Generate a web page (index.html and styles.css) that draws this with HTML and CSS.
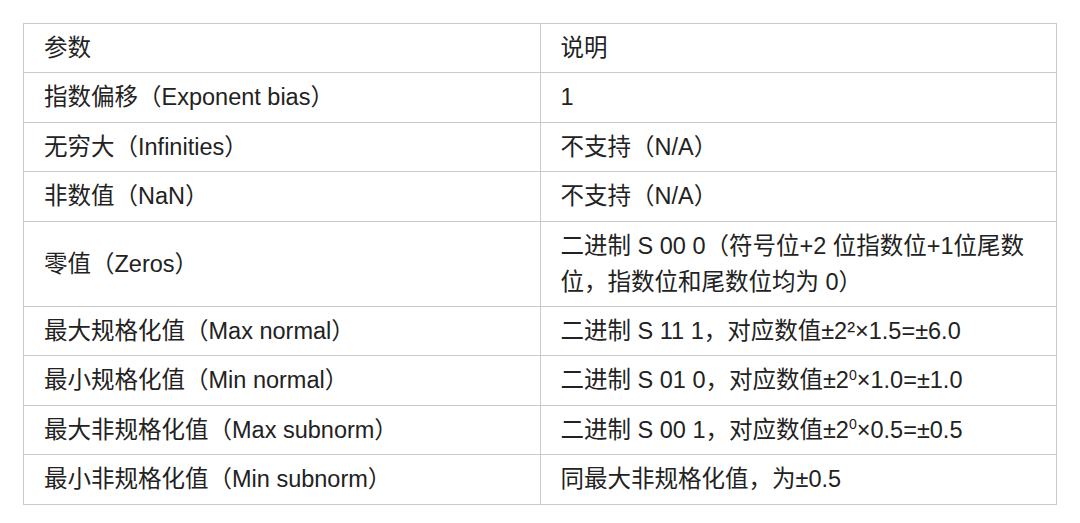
FILE: index.html
```html
<!DOCTYPE html>
<html lang="zh-CN">
<head>
<meta charset="utf-8">
<title>FP4 参数</title>
<link rel="stylesheet" href="styles.css">
</head>
<body>
<table class="spec">
  <tbody>
    <tr><td>参数</td><td>说明</td></tr>
    <tr><td>指数偏移（Exponent bias）</td><td>1</td></tr>
    <tr><td>无穷大（Infinities）</td><td>不支持（N/A）</td></tr>
    <tr><td>非数值（NaN）</td><td>不支持（N/A）</td></tr>
    <tr><td>零值（Zeros）</td><td>二进制 S 00 0（符号位+2 位指数位+1位尾数位，指数位和尾数位均为 0）</td></tr>
    <tr><td>最大规格化值（Max normal）</td><td>二进制 S 11 1，对应数值±2²×1.5=±6.0</td></tr>
    <tr><td>最小规格化值（Min normal）</td><td>二进制 S 01 0，对应数值±2<span class="sup">0</span>×1.0=±1.0</td></tr>
    <tr><td>最大非规格化值（Max subnorm）</td><td>二进制 S 00 1，对应数值±2<span class="sup">0</span>×0.5=±0.5</td></tr>
    <tr><td>最小非规格化值（Min subnorm）</td><td>同最大非规格化值，为±0.5</td></tr>
  </tbody>
</table>
</body>
</html>
```
FILE: styles.css
```css
html, body {
  margin: 0;
  padding: 0;
  background: #ffffff;
}

body {
  padding: 23px 23px 0 23px;
  font-family: "Liberation Sans", "Noto Sans CJK SC", sans-serif;
  font-size: 23.5px;
  color: #222222;
}

.spec {
  width: 1034px;
  border-collapse: collapse;
  table-layout: fixed;
}

.spec td {
  width: 50%;
  border: 1px solid #c9c9cf;
  padding: 6px 20px 6.4px 20px;
  line-height: 36px;
  vertical-align: middle;
  text-align: left;
}

.sup {
  font-size: 0.6em;
  line-height: 0;
  position: relative;
  top: -0.62em;
}
```
